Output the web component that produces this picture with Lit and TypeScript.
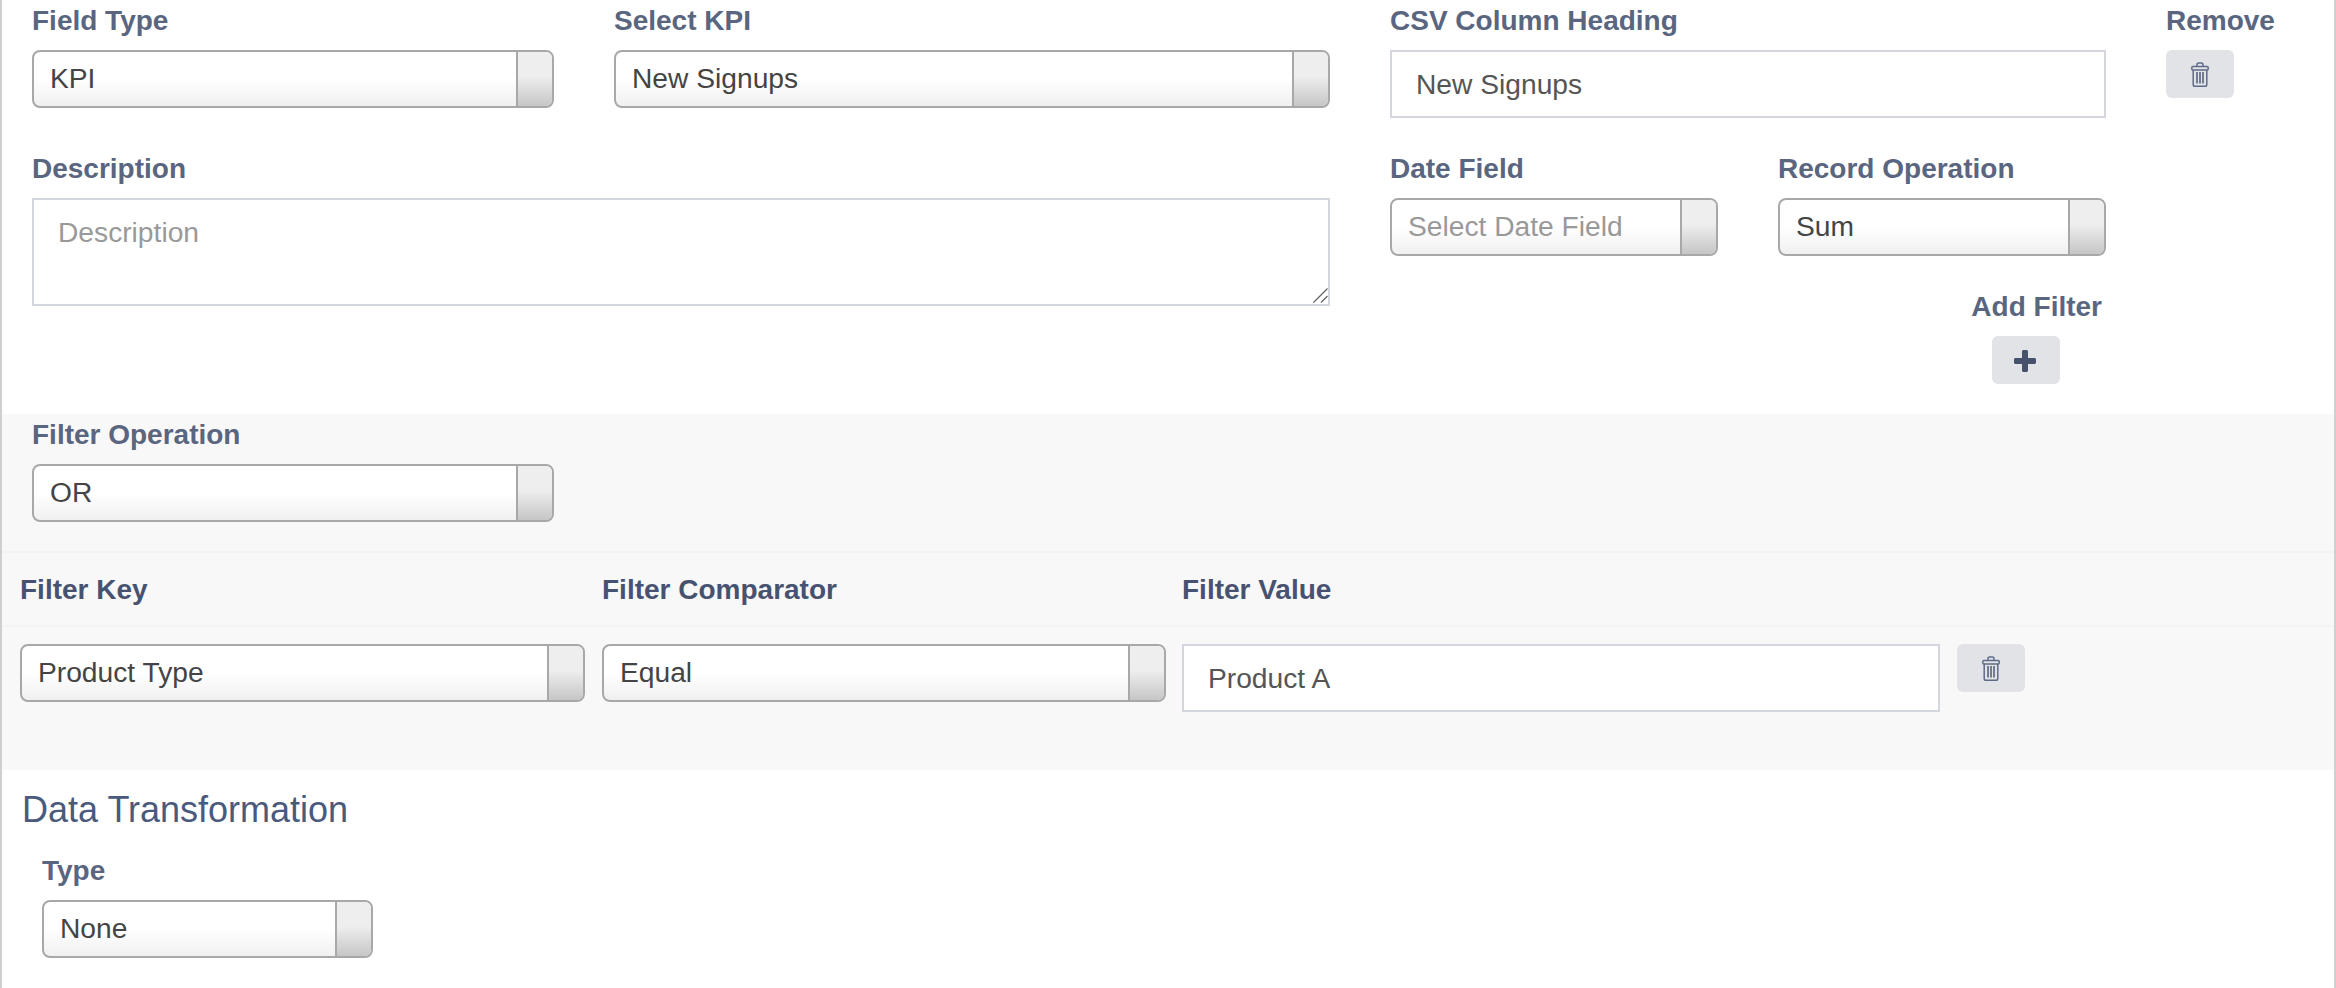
import { LitElement, html, css, svg } from "lit";
import { customElement } from "lit/decorators.js";

const trash = svg`<svg class="trash" width="18" height="25" viewBox="0 0 18 25" fill="none" stroke="currentColor">
  <path stroke-width="1.5" d="M6 4.500V2.600C6 1.600 6.800 1 7.600 1h2.800c.8 0 1.600.6 1.600 1.600v1.900"/>
  <rect x="0.8" y="4.500" width="16.400" height="3.600" rx="1" stroke-width="1.500"/>
  <path stroke-width="1.500" d="M2.200 8.100v14.300c0 1.100.8 1.800 1.800 1.800h10c1 0 1.800-.7 1.800-1.800V8.100"/>
  <path stroke-width="1.700" d="M6 10v11.500M9 10v11.500M12 10v11.500"/>
</svg>`;

@customElement("app-root")
export class AppRoot extends LitElement {
  static styles = css`
    :host {
      display: block;
      box-sizing: border-box;
      width: 2336px;
      height: 988px;
      overflow: hidden;
      background: #fff;
      border-left: 2px solid #cfcfcf;
      border-right: 2px solid #cfcfcf;
      margin: 0;
      font-family: "Liberation Sans", Arial, sans-serif;
      color: #444;
    }
    * { box-sizing: border-box; }
    label, .label {
      display: block;
      height: 40px;
      line-height: 42px;
      margin-bottom: 10px;
      font-size: 28px;
      font-weight: 700;
      color: #5a6580;
      white-space: nowrap;
    }
    .top {
      display: flex;
      height: 414px;
      padding-left: 30px;
      gap: 60px;
    }
    .col { display: flex; flex-direction: column; }
    .left { width: 1298px; gap: 40px; }
    .right { width: 716px; gap: 30px; }
    .row { display: flex; }
    .g60 { gap: 60px; }
    .w522 { width: 522px; }
    .w716 { width: 716px; }
    .w328 { width: 328px; }

    .select { position: relative; height: 58px; }
    select {
      display: block;
      width: 100%;
      height: 100%;
      appearance: none;
      -webkit-appearance: none;
      margin: 0;
      padding: 0 50px 3px 16px;
      border: 2px solid #a8a8a8;
      border-radius: 8px;
      outline: none;
      background: linear-gradient(#fff 0%, #fff 50%, #f0f0f0 100%);
      font: 28.2px "Liberation Sans", Arial, sans-serif;
      color: #444;
    }
    select.ph { color: #999; }
    .arrow {
      position: absolute;
      top: 2px;
      right: 2px;
      bottom: 2px;
      width: 36px;
      border-left: 2px solid #a8a8a8;
      border-radius: 0 6px 6px 0;
      background: linear-gradient(#eee 0%, #eee 45%, #c6c6c6 100%);
      pointer-events: none;
    }
    input, textarea {
      display: block;
      width: 100%;
      margin: 0;
      border: 2px solid #d3d6de;
      border-radius: 0;
      outline: none;
      background: #fff;
      font: 28.2px "Liberation Sans", Arial, sans-serif;
      color: #555;
    }
    input { height: 68px; padding: 0 24px; }
    .area { position: relative; }
    textarea { height: 108px; padding: 16px 24px; resize: none; }
    textarea::placeholder { color: #999; opacity: 1; }
    .grip { position: absolute; right: 2px; bottom: 3px; display: block; }
    .icon-btn {
      display: flex;
      align-items: center;
      justify-content: center;
      width: 68px;
      height: 48px;
      padding: 0;
      border: 0;
      border-radius: 6px;
      background: #e1e3e7;
      color: #5f6c87;
    }
    .add {
      display: flex;
      flex-direction: column;
      align-items: flex-end;
      padding-right: 4px;
    }
    .add .icon-btn { margin-right: 42px; color: #46516c; }
    .add .icon-btn svg { display: block; margin: 2px 2px 0 0; }

    .grey { background: #f8f8f8; height: 356px; }
    .op {
      height: 139px;
      padding: 0 0 0 30px;
      border-bottom: 2px solid #f3f3f3;
    }
    .heads {
      display: flex;
      align-items: center;
      height: 74px;
      padding-left: 18px;
      gap: 17px;
      border-bottom: 2px solid #f3f3f3;
    }
    .heads .label { margin: 0; width: 565px; color: #475270; }
    .heads .label:nth-child(2) { width: 564px; margin-right: -1px; }
    .filters {
      display: flex;
      align-items: flex-start;
      gap: 17px;
      padding: 17px 0 0 18px;
    }
    .w565 { width: 565px; }
    .w564 { width: 564px; margin-right: -1px; }
    .w758 { width: 758px; }

    .transform { padding-left: 20px; }
    h3 {
      margin: 0;
      height: 78px;
      line-height: 80px;
      font-size: 36px;
      font-weight: 400;
      color: #4a5a7c;
    }
    .type { margin-left: 20px; width: 331px; }
    .type label { margin-top: 2px; margin-bottom: 10px; }
  `;

  private sel(value: string, ph = false) {
    return html`<div class="select">
      <select class=${ph ? "ph" : ""}><option>${value}</option></select>
      <span class="arrow"></span>
    </div>`;
  }

  render() {
    return html`
      <div class="top">
        <div class="col left">
          <div class="row g60">
            <div class="w522"><label>Field Type</label>${this.sel("KPI")}</div>
            <div class="w716"><label>Select KPI</label>${this.sel("New Signups")}</div>
          </div>
          <div>
            <label>Description</label>
            <div class="area">
              <textarea placeholder="Description"></textarea>
              <svg class="grip" width="15" height="15" viewBox="0 0 15 15" fill="none" stroke="#666" stroke-width="1.300"><path d="M14.500.5L.5 14.500M14.500 8L8 14.500"/></svg>
            </div>
          </div>
        </div>
        <div class="col right">
          <div><label>CSV Column Heading</label><input value="New Signups" /></div>
          <div class="row g60">
            <div class="w328"><label>Date Field</label>${this.sel("Select Date Field", true)}</div>
            <div class="w328"><label>Record Operation</label>${this.sel("Sum")}</div>
          </div>
          <div class="add">
            <label>Add Filter</label>
            <button class="icon-btn" aria-label="Add Filter">
              <svg width="22" height="22" viewBox="0 0 22 22" fill="currentColor"><path d="M8 1.500C8 .7 8.700 0 9.500 0h3c.8 0 1.500.7 1.500 1.500V8h6.500c.8 0 1.500.7 1.500 1.500v3c0 .8-.7 1.500-1.500 1.500H14v6.500c0 .8-.7 1.500-1.500 1.500h-3C8.700 22 8 21.300 8 20.500V14H1.500C.7 14 0 13.300 0 12.500v-3C0 8.700.7 8 1.500 8H8z"/></svg>
            </button>
          </div>
        </div>
        <div class="col">
          <label>Remove</label>
          <button class="icon-btn" aria-label="Remove">${trash}</button>
        </div>
      </div>
      <div class="grey">
        <div class="op">
          <label>Filter Operation</label>
          <div class="w522">${this.sel("OR")}</div>
        </div>
        <div class="heads">
          <span class="label">Filter Key</span>
          <span class="label">Filter Comparator</span>
          <span class="label">Filter Value</span>
        </div>
        <div class="filters">
          <div class="w565">${this.sel("Product Type")}</div>
          <div class="w564">${this.sel("Equal")}</div>
          <div class="w758"><input value="Product A" /></div>
          <button class="icon-btn" aria-label="Remove filter">${trash}</button>
        </div>
      </div>
      <div class="transform">
        <h3>Data Transformation</h3>
        <div class="type">
          <label>Type</label>
          ${this.sel("None")}
        </div>
      </div>
    `;
  }
}
